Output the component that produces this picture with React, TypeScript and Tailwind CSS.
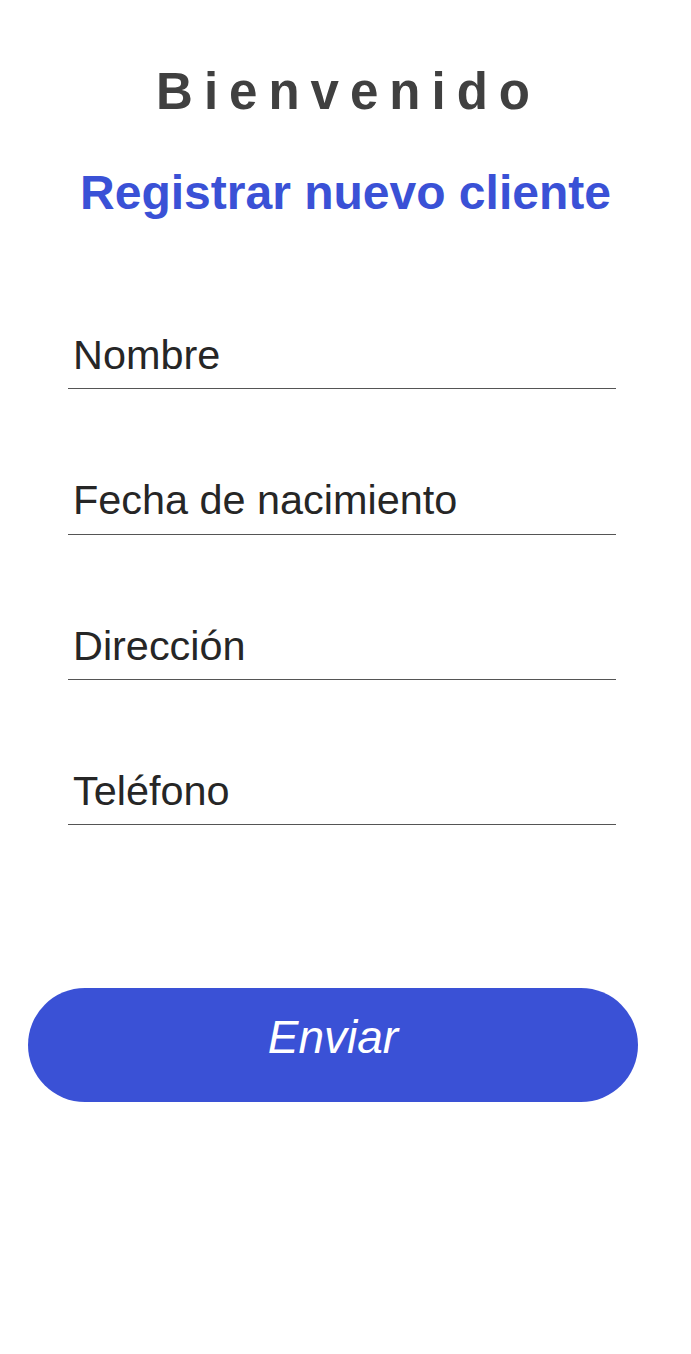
const fields = ["Nombre", "Fecha de nacimiento", "Dirección", "Teléfono"];

export default function App() {
  return (
    <div className="min-h-[1354px] w-full bg-white flex flex-col font-['Liberation_Sans',Arial,sans-serif]">
      <h1 className="pt-[66px] w-full text-center pl-[6px] text-[51px] leading-none font-bold tracking-[11px] text-[#404040]">
        Bienvenido
      </h1>
      <h2 className="mt-[52px] w-full text-center text-[48px] leading-none font-bold text-[#3a51d6]">
        Registrar nuevo cliente
      </h2>

      <form className="mt-[118px] ml-[68px] w-[548px] flex flex-col gap-[90.9px]">
        {fields.map((f) => (
          <label key={f} className="flex flex-col gap-[12px]">
            <span className="pl-[5px] text-[41.4px] leading-none text-[#262626]">{f}</span>
            <span className="block h-px bg-[#555555]" />
          </label>
        ))}
      </form>

      <button
        type="button"
        className="mt-[163px] ml-[28px] w-[610px] h-[114px] pb-[16px] rounded-full bg-[#3a51d6] text-white italic text-[46px] leading-none"
      >
        Enviar
      </button>
    </div>
  );
}
